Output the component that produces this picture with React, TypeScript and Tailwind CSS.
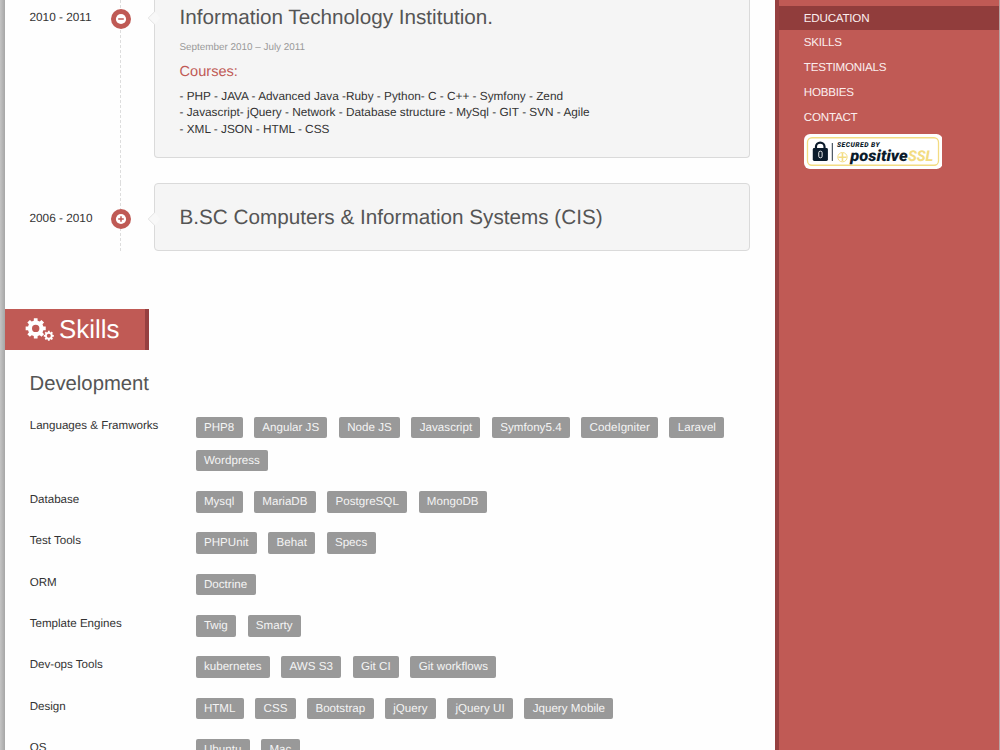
import React from "react";

const navItems = ["EDUCATION", "SKILLS", "TESTIMONIALS", "HOBBIES", "CONTACT"];

const skills = [
  { name: "Languages & Framworks", tags: ["PHP8", "Angular JS", "Node JS", "Javascript", "Symfony5.4", "CodeIgniter", "Laravel", "Wordpress"] },
  { name: "Database", tags: ["Mysql", "MariaDB", "PostgreSQL", "MongoDB"] },
  { name: "Test Tools", tags: ["PHPUnit", "Behat", "Specs"] },
  { name: "ORM", tags: ["Doctrine"] },
  { name: "Template Engines", tags: ["Twig", "Smarty"] },
  { name: "Dev-ops Tools", tags: ["kubernetes", "AWS S3", "Git CI", "Git workflows"] },
  { name: "Design", tags: ["HTML", "CSS", "Bootstrap", "jQuery", "jQuery UI", "Jquery Mobile"] },
  { name: "OS", tags: ["Ubuntu", "Mac"] },
];

// Eight-toothed gear with a round hole
function gearPath(cx: number, cy: number, outer: number, inner: number, hole: number) {
  const points: string[] = [];
  for (let i = 0; i < 8; i++) {
    const a = (i * Math.PI) / 4;
    [[-0.25, inner], [-0.18, outer], [0.18, outer], [0.25, inner]].forEach(([d, r]) => {
      points.push(`${(cx + r * Math.cos(a + d)).toFixed(2)} ${(cy + r * Math.sin(a + d)).toFixed(2)}`);
    });
  }
  return `M${points.join("L")}ZM${cx - hole} ${cy}a${hole} ${hole} 0 1 0 ${hole * 2} 0a${hole} ${hole} 0 1 0 ${-hole * 2} 0Z`;
}

function GearsIcon() {
  return (
    <svg width="30" height="24" viewBox="0 0 30 24" fill="white" fillRule="evenodd">
      <path d={gearPath(10.7, 11.4, 10.2, 7.9, 3.7)} />
      <path d={gearPath(23.8, 18.8, 5.1, 3.9, 2)} />
    </svg>
  );
}

function Marker({ open }: { open: boolean }) {
  return (
    <svg className="-ml-[10px] relative" width="20" height="20" viewBox="0 0 20 20">
      <circle cx="10" cy="10" r="10" fill="#bf5a55" />
      <circle cx="10" cy="10" r="5.1" fill="white" />
      <path d={open ? "M7.2 10h5.6" : "M7.2 10h5.6M10 7.2v5.6"} stroke="#bf5a55" strokeWidth="1.5" />
    </svg>
  );
}

function Arrow() {
  return (
    <svg className="absolute -left-[8px]" width="14" height="14" viewBox="0 0 14 14">
      <path d="M7.5 .8L13.5 7L7.5 13.2L1.2 7Z" fill="#f8f8f8" />
      <path d="M7.5 .8L1.2 7L7.5 13.2" fill="none" stroke="#e3e3e3" strokeWidth="1" />
    </svg>
  );
}

function SslBadge() {
  return (
    <svg className="ml-[24.5px] mt-[4.5px]" width="138.5" height="35" viewBox="0 0 139 35">
      <rect width="139" height="35" rx="6" fill="white" />
      <rect x="3.5" y="3.7" width="131.5" height="27.6" rx="4.5" fill="none" stroke="#f3dc82" strokeWidth="1.3" />
      <path d="M12 15v-2.2a4.3 4.3 0 0 1 8.6 0V15" fill="none" stroke="#0b1b2b" strokeWidth="2.2" />
      <rect x="8.8" y="14" width="15.2" height="13" rx="1.5" fill="#0b1b2b" />
      <rect x="14.8" y="17.2" width="3.4" height="6.6" rx="1.5" fill="none" stroke="white" strokeWidth="0.9" />
      <path d="M28.4 9v18" stroke="#0b1b2b" strokeWidth="0.9" />
      <text x="33" y="13" fontSize="6.8" fontWeight="900" fontStyle="italic" fontFamily="Roboto, sans-serif" fill="#0b1b2b" textLength="43">SECURED BY</text>
      <circle cx="38.6" cy="23.2" r="4.7" fill="none" stroke="#f3dc82" strokeWidth="1" />
      <path d="M34.5 23.2h8.2M38.6 19v8.4" stroke="#f3dc82" strokeWidth="1.6" />
      <text x="46.5" y="26.8" fontSize="15.8" fontWeight="900" fontStyle="italic" fontFamily="Roboto, sans-serif" fill="#0b1b2b" textLength="57.5" lengthAdjust="spacingAndGlyphs">positive</text>
      <text x="104.3" y="26.8" fontSize="15" fontWeight="800" fontStyle="italic" fontFamily="Roboto, sans-serif" fill="#f3dc82" textLength="25.5" lengthAdjust="spacingAndGlyphs">SSL</text>
    </svg>
  );
}

export default function App() {
  return (
    <div className="flex h-[750px] w-[1000px] overflow-hidden bg-[#fefefe] font-['Liberation_Sans',Arial,sans-serif] text-[11.58px] text-[#333] [text-rendering:geometricPrecision]">
      <div className="w-[5px] shrink-0 bg-linear-to-r from-[#c4c4c4] to-[#a6a6a6]"></div>

      <main className="w-[770px] shrink-0">
        {/* Education timeline */}
        <section>
          <div className="flex h-[183px]">
            <div className="w-[115px] pl-[24.5px] pt-[9px] text-[11.8px] leading-[16px]">2010 - 2011</div>
            <div className="w-[34px] border-l border-dashed border-[#ddd] pt-[8.5px]"><Marker open /></div>
            <div className="relative h-[158px] w-[596px] rounded-b-[4px] border border-t-0 border-[#dadada] bg-[#f5f5f5] pl-[24.5px]">
              <div className="absolute left-0 top-[11px]"><Arrow /></div>
              <h3 className="pt-[5px] text-[20.7px] leading-[26px] text-[#555]">Information Technology Institution.</h3>
              <p className="mt-[10.5px] text-[9.9px] leading-[12px] text-[#999]">September 2010 – July 2011</p>
              <h4 className="mt-[9px] text-[14.6px] leading-[18px] text-[#c05a55]">Courses:</h4>
              <div className="mt-[7.5px] text-[11.8px] leading-[16.4px]">
                <p>- PHP - JAVA - Advanced Java -Ruby - Python- C - C++ - Symfony - Zend</p>
                <p>- Javascript- jQuery - Network - Database structure - MySql - GIT - SVN - Agile</p>
                <p>- XML - JSON - HTML - CSS</p>
              </div>
            </div>
          </div>

          <div className="flex h-[68px]">
            <div className="w-[115px] pl-[24.5px] pt-[26.5px] text-[11.8px] leading-[16px]">2006 - 2010</div>
            <div className="w-[34px] border-l border-dashed border-[#ddd] pt-[26px]"><Marker open={false} /></div>
            <div className="relative w-[596px] rounded-[4px] border border-[#dadada] bg-[#f5f5f5] pl-[24.5px] pt-[21px]">
              <div className="absolute left-0 top-[28px]"><Arrow /></div>
              <h3 className="text-[20.7px] leading-[26px] text-[#555]">B.SC Computers & Information Systems (CIS)</h3>
            </div>
          </div>
        </section>

        {/* Skills */}
        <section className="pt-[57.5px]">
          <div className="flex h-[41.5px] w-[143.5px] items-center border-r-4 border-[#964040] bg-[#c05a55] pl-[20px]">
            <GearsIcon />
            <h2 className="ml-[4px] pt-[2px] text-[25.9px] leading-[30px] text-white">Skills</h2>
          </div>
          <h3 className="mt-[21px] pl-[24.5px] text-[20.3px] leading-[26px] text-[#555]">Development</h3>
          <div className="mt-[19.5px] pl-[24.7px]">
            {skills.map((skill) => (
              <div key={skill.name} className="flex pb-[8.15px]">
                <div className="w-[165.9px] shrink-0 pt-[1px] leading-[16px]">{skill.name}</div>
                <div className="flex w-[545px] flex-wrap gap-x-[11.4px]">
                  {skill.tags.map((tag) => (
                    <span key={tag} className="mb-[11.7px] h-[21.5px] rounded-[2px] bg-[#999] px-[8.3px] leading-[22.4px] tracking-[0.03px] text-[#f4f4f4]">{tag}</span>
                  ))}
                </div>
              </div>
            ))}
          </div>
        </section>
      </main>

      <aside className="w-[223.5px] shrink-0 border-l-4 border-[#964040] bg-[#c05a55] pt-[5.7px]">
        <nav className="tracking-[-0.2px]">
          {navItems.map((item) => (
            <a key={item} className={item === "EDUCATION" ? "block h-[24.75px] bg-[#913d3c] pl-[24.8px] leading-[26.8px] text-[#fbeeee]" : "block h-[24.75px] pl-[24.8px] leading-[26.8px] text-[#fbeeee]"}>
              {item}
            </a>
          ))}
        </nav>
        <SslBadge />
      </aside>
      <div className="w-[1.5px] bg-[#b9a5a5]"></div>
    </div>
  );
}
